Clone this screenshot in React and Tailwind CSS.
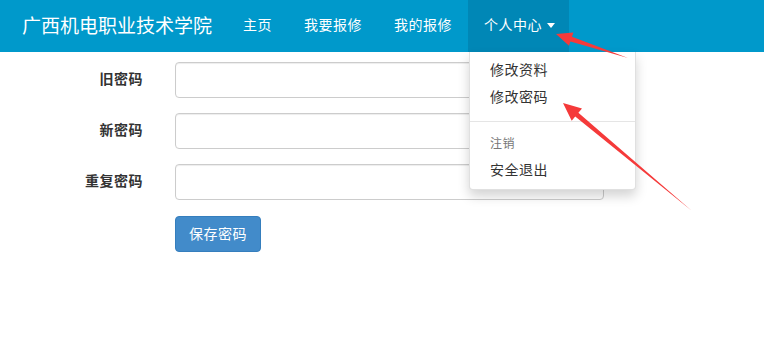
import React from "react";

const font = { fontFamily: '"Noto Sans CJK SC", "Noto Sans", sans-serif' };

function Field({ label }) {
  return (
    <div className="flex items-center">
      <label className="w-[143px] pb-[3px] text-right text-[14px] tracking-[0.5px] font-bold text-[#333]">{label}</label>
      <input
        type="password"
        className="ml-[32px] w-[429px] h-[36px] rounded-[4px] border border-[#ccc] bg-white shadow-[inset_0_1px_1px_rgba(0,0,0,0.075)] outline-none"
      />
    </div>
  );
}

export default function App() {
  return (
    <div className="relative w-[764px] h-[358px] bg-white overflow-hidden" style={font}>
      <nav className="flex h-[52px] bg-[#0099cb] text-white items-stretch">
        <div className="pl-[22px] pr-[15px] pb-[3px] flex items-center text-[19px] leading-none">广西机电职业技术学院</div>
        <a className="px-[16px] pb-[3px] flex items-center text-[14px] tracking-[0.5px]">主页</a>
        <a className="px-[16px] pb-[3px] flex items-center text-[14px] tracking-[0.5px]">我要报修</a>
        <a className="px-[16px] pb-[3px] flex items-center text-[14px] tracking-[0.5px]">我的报修</a>
        <div className="relative">
          <a className="h-full pl-[16px] pr-[14px] pb-[3px] flex items-center text-[14px] tracking-[0.5px] bg-[#0087b6]">
            个人中心
            <span className="ml-[5px] mt-[2px] w-0 h-0 border-l-[4.5px] border-r-[4.5px] border-t-[5px] border-l-transparent border-r-transparent border-t-white"></span>
          </a>
          <div className="absolute left-[1px] top-full w-[167px] bg-white border border-[rgba(0,0,0,0.12)] border-t-0 rounded-b-[4px] shadow-[0_6px_12px_rgba(0,0,0,0.175)] pt-[5px] pb-[5px] text-[14px] tracking-[0.5px] text-[#333] z-10">
            <div className="h-[27px] pl-[20px] pb-[2px] flex items-center">修改资料</div>
            <div className="h-[27px] pl-[20px] pb-[2px] flex items-center">修改密码</div>
            <div className="mt-[10px] mb-[8px] h-px bg-[#e5e5e5]"></div>
            <div className="h-[27px] pl-[20px] pb-[2px] flex items-center text-[12px] text-[#777]">注销</div>
            <div className="h-[27px] pl-[20px] pb-[2px] flex items-center">安全退出</div>
          </div>
        </div>
      </nav>

      <div className="pt-[10px] flex flex-col gap-[15px]">
        <Field label="旧密码" />
        <Field label="新密码" />
        <Field label="重复密码" />
        <div className="ml-[175px] mt-[1px]">
          <button className="w-[86px] h-[36px] pb-[2px] rounded-[4px] bg-[#428bca] border border-[#357ebd] text-white text-[14px] tracking-[0.5px]">
            保存密码
          </button>
        </div>
      </div>

      <svg className="absolute inset-0 pointer-events-none z-20" width="764" height="358" viewBox="0 0 764 358">
        <polygon
          fill="#f53a3a"
          points="556,34 573.4,32.5 572,36.7 628,58 570.4,41.5 569,45.7"
        />
        <polygon
          fill="#f53a3a"
          points="563,103 582,108.5 578.4,112.7 692,211 575.2,116.5 571.7,120.7"
        />
      </svg>
    </div>
  );
}
